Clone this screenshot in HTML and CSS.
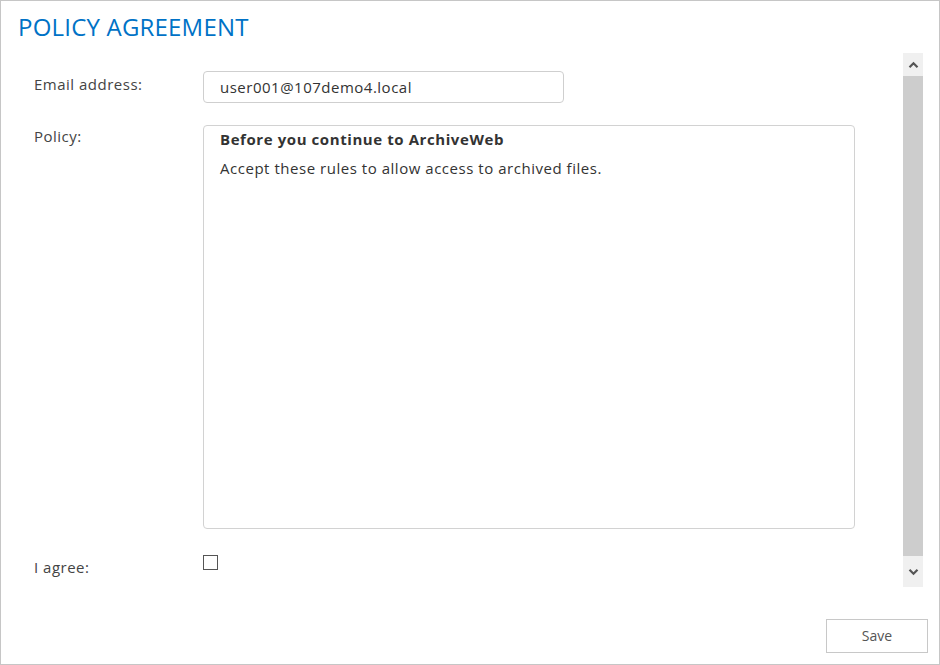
FILE: index.html
```html
<!DOCTYPE html>
<html>
<head>
<meta charset="utf-8">
<link rel="stylesheet" href="styles.css">
</head>
<body>
<div class="frame">
  <h1 class="title">POLICY AGREEMENT</h1>
  <div class="scrollwrap">
    <div class="content">
      <div class="row row-email">
        <div class="label label-email">Email address:</div>
        <div class="input">user001@107demo4.local</div>
      </div>
      <div class="row row-policy">
        <div class="label label-top">Policy:</div>
        <div class="policy">
          <div class="policy-head">Before you continue to ArchiveWeb</div>
          <div class="policy-text">Accept these rules to allow access to archived files.</div>
        </div>
      </div>
      <div class="row row-agree">
        <div class="label label-agree">I agree:</div>
        <div class="checkbox"></div>
      </div>
    </div>
    <div class="scrollbar">
      <div class="sb-btn">
        <svg width="11" height="8" viewBox="0 0 11 8"><path d="M1.5 6.2 L5.5 2.2 L9.5 6.2" fill="none" stroke="#555" stroke-width="2.2"/></svg>
      </div>
      <div class="sb-thumb"></div>
      <div class="sb-btn sb-btn-down">
        <svg width="11" height="8" viewBox="0 0 11 8"><path d="M1.5 1.8 L5.5 5.8 L9.5 1.8" fill="none" stroke="#555" stroke-width="2.2"/></svg>
      </div>
    </div>
  </div>
  <div class="footer">
    <div class="save">Save</div>
  </div>
</div>
</body>
</html>
```

FILE: styles.css
```css
html, body {
  margin: 0;
  padding: 0;
  background: #ffffff;
}
.frame {
  box-sizing: border-box;
  width: 940px;
  height: 665px;
  border: 1px solid #c6c6c6;
  display: flex;
  flex-direction: column;
  font-family: "Open Sans", "Noto Sans", sans-serif;
  color: #444444;
}
.title {
  margin: 0;
  padding: 10px 0 0 17px;
  height: 42px;
  box-sizing: border-box;
  font-size: 24px;
  font-weight: 400;
  line-height: 32px;
  color: #0072c6;
  letter-spacing: 0.2px;
}
.scrollwrap {
  display: flex;
  height: 534px;
  margin-top: 10px;
  padding-right: 16px;
}
.content {
  flex: 1;
  padding: 18px 0 0 33px;
  box-sizing: border-box;
}
.row {
  display: flex;
}
.label {
  width: 169px;
  font-size: 15px;
  letter-spacing: 0.5px;
  line-height: 20px;
}
.row-email {
  align-items: flex-start;
}
.label-email {
  padding-top: 3px;
}
.label-top {
  padding-top: 1px;
}
.input {
  box-sizing: border-box;
  width: 361px;
  height: 32px;
  border: 1px solid #cfcfcf;
  border-radius: 4px;
  padding: 0 0 0 16px;
  font-size: 15px;
  letter-spacing: 0.5px;
  line-height: 30px;
  color: #333333;
}
.row-policy {
  margin-top: 22px;
}
.policy {
  box-sizing: border-box;
  width: 652px;
  height: 404px;
  border: 1px solid #d2d2d2;
  border-radius: 4px;
  padding: 1px 16px;
  font-size: 15px;
  letter-spacing: 0.53px;
  color: #333333;
}
.policy-head {
  font-weight: 700;
  letter-spacing: 0.58px;
  line-height: 24px;
}
.policy-text {
  margin-top: 7px;
  line-height: 20px;
}
.row-agree {
  margin-top: 26px;
  align-items: flex-start;
}
.label-agree {
  padding-top: 2px;
}
.checkbox {
  box-sizing: border-box;
  width: 15px;
  height: 15px;
  border: 1px solid #555555;
}
.scrollbar {
  width: 20px;
  height: 534px;
  display: flex;
  flex-direction: column;
  background: #f0f0f0;
}
.sb-btn {
  height: 23px;
  display: flex;
  align-items: center;
  justify-content: center;
  background: #f0f0f0;
}
.sb-btn-down {
  height: 31px;
}
.sb-thumb {
  flex: 1;
  background: #cdcdcd;
}
.footer {
  display: flex;
  justify-content: flex-end;
  padding: 32px 11px 0 0;
}
.save {
  box-sizing: border-box;
  width: 102px;
  height: 34px;
  border: 1px solid #c8c8c8;
  font-size: 14px;
  line-height: 32px;
  text-align: center;
  color: #555555;
}
```
